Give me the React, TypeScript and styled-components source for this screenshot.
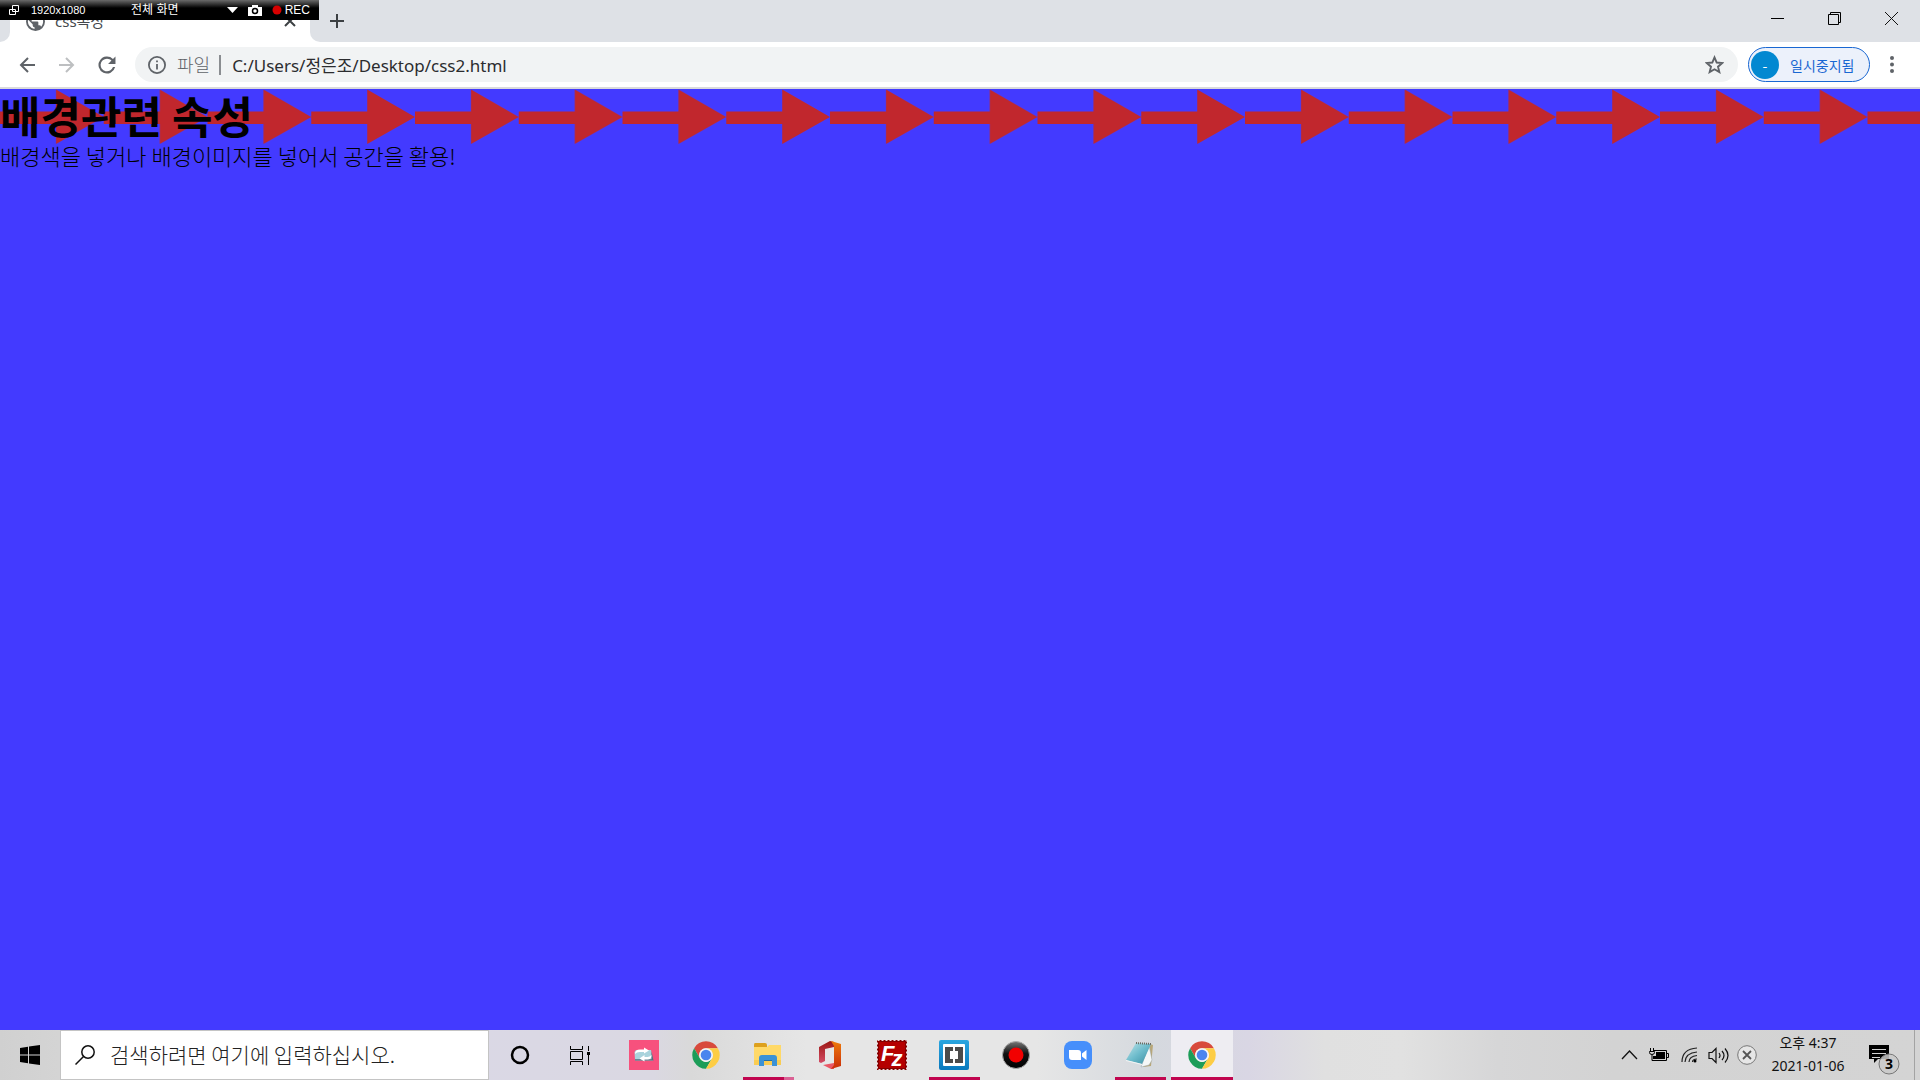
import React from "react";
import styled, { createGlobalStyle } from "styled-components";

const sans = `"Noto Sans", "Noto Sans CJK KR", sans-serif`;
const korean = `"Noto Sans CJK KR", "Noto Sans", sans-serif`;
const accent = "#c1054f";

const GlobalStyle = createGlobalStyle`
  *, *::before, *::after { box-sizing: border-box; }
  body { margin: 0; font-family: ${sans}; }
  button, input { font: inherit; color: inherit; border: 0; padding: 0; margin: 0; background: none; outline: none; }
  svg { display: block; flex: none; }
`;

const Screen = styled.div`
  display: flex;
  flex-direction: column;
  min-height: 100vh;
`;

/* ---------- Recorder overlay ---------- */

const Recorder = styled.aside`
  position: absolute;
  top: 0;
  left: 0;
  width: 319px;
  height: 20px;
  padding: 0 9px 0 8px;
  display: flex;
  align-items: center;
  color: #fff;
  font: 12px/20px "Liberation Sans Narrow", "Liberation Sans", "Noto Sans CJK KR", sans-serif;
  background: linear-gradient(#6a6a6a, #000 8px);
`;

const RecorderSize = styled.span`
  margin-left: 11px;
  width: 100px;
  font-size: 11px;
`;

const RecorderMode = styled.span`
  flex: 1;
`;

const RecorderTools = styled.div`
  display: flex;
  align-items: center;
  gap: 10px;
`;

const Rec = styled.span`
  display: flex;
  align-items: center;
  gap: 3px;
`;

/* ---------- Browser ---------- */

const TabStrip = styled.header`
  display: flex;
  height: 42px;
  background: #fff;
`;

const StripStart = styled.div`
  width: 10px;
  background: #dee1e6;
  border-bottom-right-radius: 10px;
`;

const Tab = styled.div`
  display: flex;
  align-items: center;
  width: 300px;
  padding: 0 12px 0 16px;
  color: #45494d;
  font-size: 15px;
`;

const TabTitle = styled.span`
  flex: 1;
  margin-left: 10px;
  line-height: 20px;
`;

const StripRest = styled.div`
  flex: 1;
  display: flex;
  align-items: flex-start;
  justify-content: space-between;
  background: #dee1e6;
  border-bottom-left-radius: 10px;
`;

const IconButton = styled.button<{ $w: number; $h: number }>`
  display: flex;
  align-items: center;
  justify-content: center;
  flex: none;
  width: ${(p) => p.$w}px;
  height: ${(p) => p.$h}px;
`;

const WindowButtons = styled.div`
  display: flex;
`;

const Toolbar = styled.nav`
  display: flex;
  align-items: center;
  height: 47px;
  padding: 0 6px 0 7px;
  background: #fff;
  border-bottom: 2px solid #d9dadc;
`;

const AddressBar = styled.form`
  flex: 1;
  display: flex;
  align-items: center;
  height: 35px;
  margin: 0 10px 0 8px;
  padding: 0 13px;
  border-radius: 18px;
  background: #f1f3f4;
  color: #2b2c2f;
  font-size: 17px;
`;

const Scheme = styled.label`
  margin-left: 11px;
  padding-right: 9px;
  border-right: 2px solid #8a8d91;
  line-height: 20px;
  font-size: 18px;
  font-weight: 300;
  color: #5f6368;
`;

const AddressInput = styled.input`
  flex: 1;
  min-width: 0;
  margin-left: 11px;
`;

const Profile = styled.button`
  display: flex;
  align-items: center;
  gap: 11px;
  height: 35px;
  width: 122px;
  padding: 0 2px;
  border: 1px solid #1967d2;
  border-radius: 18px;
  background: #ecf1fb;
  color: #1967d2;
  font-family: ${korean};
  font-size: 14px;
  line-height: 20px;
`;

const Avatar = styled.span`
  display: grid;
  place-items: center;
  width: 28px;
  height: 28px;
  border-radius: 50%;
  background: #0288d1;
  color: #fff;
  font-size: 14px;
`;

/* ---------- Web page ---------- */

const Page = styled.main`
  position: relative;
  flex: 1;
  background: #433aff;
  color: #000;
  font-family: ${korean};
`;

const ArrowStrip = styled.svg`
  position: absolute;
  top: 0;
  left: 0;
`;

const Heading = styled.h1`
  position: relative;
  margin: 0;
  font-size: 44px;
  line-height: 53px;
  font-weight: 700;
`;

const Paragraph = styled.p`
  position: relative;
  margin: 0;
  font-size: 22px;
  line-height: 27px;
  font-weight: 300;
`;

/* ---------- Taskbar ---------- */

const Taskbar = styled.footer`
  display: flex;
  height: 50px;
  background: linear-gradient(
    90deg,
    #d0d0d0 0,
    #d4d4d4 3%,
    #dad8e5 25%,
    #dad8e2 34%,
    #d9d9d9 36%,
    #e6e6e6 42%,
    #e6e6e6 54%,
    #d5d9de 60%,
    #d9d6e4 65%,
    #e0e0e0 69%,
    #e1e1e1 73%,
    #d6d6d7 78%,
    #d3d3d3 84%,
    #d4d4d4 100%
  );
`;

const SearchBox = styled.label`
  display: flex;
  align-items: center;
  gap: 15px;
  width: 429px;
  padding: 0 14px;
  background: #fff;
  border: 1px solid #c4c4c4;
`;

const SearchInput = styled.input`
  flex: 1;
  min-width: 0;
  height: 44px;
  padding-bottom: 2px;
  font-family: ${korean};
  font-size: 21px;
  font-weight: 300;
  &::placeholder { color: #222; opacity: 1; }
`;

const Apps = styled.div`
  display: flex;
  margin-left: 3px;
`;

const AppButton = styled.button<{ $state?: "open" | "many" | "active" }>`
  display: flex;
  flex-direction: column;
  align-items: center;
  width: 62px;
  height: 50px;
  padding-top: 10px;
  background: ${(p) => (p.$state === "active" ? "#eeedf2" : "none")};

  &::after {
    content: "";
    display: ${(p) => (p.$state ? "block" : "none")};
    width: ${(p) => (p.$state === "active" ? "100%" : "51px")};
    height: 3px;
    margin-top: 7px;
    background: ${(p) =>
      p.$state === "many" ? `linear-gradient(90deg, ${accent} 41px, #da6295 41px)` : accent};
  }
`;

const Tray = styled.div`
  display: flex;
  align-items: center;
  margin-left: auto;
`;

const Clock = styled.time`
  display: flex;
  flex-direction: column;
  align-items: center;
  width: 92px;
  padding-bottom: 2px;
  font-size: 14px;
  line-height: 23px;
  color: #111;
`;

const ShowDesktop = styled.button`
  width: 6px;
  height: 50px;
  border-left: 1px solid #a3a3a3;
`;

function Globe() {
  return (
    <svg width="19" height="19" viewBox="2 2 20 20" fill="#5f6368">
      <path d="M12 2a10 10 0 1 0 0 20 10 10 0 0 0 0-20zm-1 17.9A8 8 0 0 1 4.2 10.200L9 15v1a2 2 0 0 0 2 2v1.900zm6.900-2.500A2 2 0 0 0 16 16h-1v-3a1 1 0 0 0-1-1H8v-2h2a1 1 0 0 0 1-1V7h2a2 2 0 0 0 2-2v-.4a8 8 0 0 1 2.900 12.800z" />
    </svg>
  );
}

function ChromeLogo() {
  return (
    <svg width="30" height="30" viewBox="0 0 48 48">
      <path d="M4.950 13A22 22 0 0 1 43.050 13H24A11 11 0 0 0 14.470 29.500Z" fill="#d84a3c" />
      <path d="M4.950 13A22 22 0 0 0 24 46L33.530 29.500A11 11 0 0 1 14.470 29.500Z" fill="#1c9d58" />
      <path d="M24 46A22 22 0 0 0 43.050 13H24A11 11 0 0 1 33.530 29.500Z" fill="#fdcd45" />
      <circle cx="24" cy="24" r="11" fill="#f4f4f4" />
      <circle cx="24" cy="24" r="8.500" fill="#4a85ee" />
    </svg>
  );
}

function CaptureLogo() {
  return (
    <svg width="30" height="30">
      <path d="M0 0H30V30H0z" fill="#f7517d" />
      <path d="M7 10H22L24 20.500H6L5.500 12z" fill="#a9d3dc" />
      <path d="M22.500 11l2 9.500H6v-1.200h16.500z" fill="#516f7d" />
      <path d="M6 14q0-4.500 5-4.500h4V7.500l5 3-5 3V12h-4q-3.500 0-5 2zM22.500 15q0 4.500-4 4.500h-3v2l-5-3 5-3.500v2h3q2 0 4-2z" fill="#fff" />
    </svg>
  );
}

function FolderLogo() {
  return (
    <svg width="30" height="30">
      <path d="M1 5q0-2 1-2h10q2 0 2 2v2H1z" fill="#dda01d" />
      <path d="M1 7h13l2-2h12v20H1z" fill="#ffd968" />
      <path d="M1 20h27v5H1z" fill="#f9cc52" />
      <path d="M6 26V18q0-3 3-3h12q3 0 3 3v8h-5v-6h-8v6z" fill="#3b92d6" />
      <path d="M11 20h8v1h-8z" fill="#226fa8" />
    </svg>
  );
}

function OfficeLogo() {
  return (
    <svg width="30" height="30">
      <defs>
        <linearGradient id="officeLeft" x1="0" y1="0" x2="0" y2="1">
          <stop offset="0" stopColor="#9c1714" />
          <stop offset="1" stopColor="#d44c65" />
        </linearGradient>
        <linearGradient id="officeRight" x1="0" y1="0" x2="0" y2="1">
          <stop offset="0" stopColor="#ee7b0b" />
          <stop offset="1" stopColor="#c92c08" />
        </linearGradient>
      </defs>
      <path d="M4 7L15 1l4 1v5L10 9v12l-4 2-2-1z" fill="url(#officeLeft)" />
      <path d="M8 25l11-2v6l-3 0z" fill="#e95766" />
      <path d="M16 1l10 3v22l-10 3 3-4V6z" fill="url(#officeRight)" />
    </svg>
  );
}

function FileZillaLogo() {
  return (
    <svg width="30" height="30">
      <rect x="1" y="1" width="28" height="28" fill="#b50000" stroke="#850000" strokeWidth="2" />
      <rect x="0.500" y="0.500" width="29" height="29" fill="none" stroke="#e9dcdc" strokeDasharray="2 2" />
      <text x="4" y="21" fill="#fff" fontFamily="Liberation Sans, sans-serif" fontSize="22" fontWeight="700" fontStyle="italic">
        F<tspan dx="-3" dy="5">z</tspan>
      </text>
    </svg>
  );
}

function BracketsLogo() {
  return (
    <svg width="30" height="30">
      <defs>
        <linearGradient id="bracketsBlue" x1="0" y1="0" x2="0" y2="1">
          <stop offset="0" stopColor="#2ba6e0" />
          <stop offset="1" stopColor="#0878bd" />
        </linearGradient>
      </defs>
      <rect width="30" height="30" rx="2" fill="url(#bracketsBlue)" />
      <rect x="4" y="4" width="22" height="22" rx="1" fill="#fff" />
      <path d="M6 7h8v4h-3v8h3v4H6zM24 7h-8v4h3v8h-3v4h8z" fill="#4b4b4b" />
    </svg>
  );
}

function RecordLogo() {
  return (
    <svg width="30" height="30">
      <defs>
        <linearGradient id="recordRing" x1="0" y1="0" x2="0" y2="1">
          <stop offset="0" stopColor="#777" />
          <stop offset="0.450" stopColor="#111" />
          <stop offset="1" stopColor="#000" />
        </linearGradient>
      </defs>
      <circle cx="15" cy="15" r="13.500" fill="url(#recordRing)" stroke="#aaa" />
      <circle cx="15" cy="15" r="7.500" fill="#f20000" />
    </svg>
  );
}

function ZoomLogo() {
  return (
    <svg width="30" height="30">
      <rect x="1" y="1" width="28" height="28" rx="8" fill="#468ffb" />
      <path d="M6 10h9q3 0 3 3v7H9q-3 0-3-3zM19 13.500l4.500-3.500v10L19 16.500z" fill="#fff" />
    </svg>
  );
}

function NotepadLogo() {
  return (
    <svg width="30" height="30">
      <defs>
        <linearGradient id="notepadPage" x1="0" y1="0" x2="1" y2="1">
          <stop offset="0" stopColor="#c0e4e9" />
          <stop offset="0.500" stopColor="#6dbccc" />
          <stop offset="1" stopColor="#398b9f" />
        </linearGradient>
      </defs>
      <path d="M25 4l3 1-2 21-8 1z" fill="#b8a779" />
      <path d="M24 5l3 15-3 5-8 2z" fill="#f5f7f7" stroke="#99a5aa" strokeWidth="0.500" />
      <path d="M11 3l15 1-9 20L1 20z" fill="url(#notepadPage)" />
      <path d="M1 20l16 4v1L1 21z" fill="#f2f5f5" />
      <path d="M11 3l15 1" stroke="#6b6b62" strokeWidth="2" strokeDasharray="1 1" />
    </svg>
  );
}

const apps: { name: string; logo: React.ReactNode; state?: "open" | "many" | "active" }[] = [
  { name: "캡처", logo: <CaptureLogo /> },
  { name: "Chrome", logo: <ChromeLogo /> },
  { name: "파일 탐색기", logo: <FolderLogo />, state: "many" },
  { name: "Office", logo: <OfficeLogo /> },
  { name: "FileZilla", logo: <FileZillaLogo /> },
  { name: "Brackets", logo: <BracketsLogo />, state: "open" },
  { name: "녹화", logo: <RecordLogo /> },
  { name: "Zoom", logo: <ZoomLogo /> },
  { name: "메모장", logo: <NotepadLogo />, state: "open" },
  { name: "Chrome 창", logo: <ChromeLogo />, state: "active" },
];

export default function App() {
  return (
    <Screen>
      <GlobalStyle />

      <TabStrip>
        <StripStart />
        <Tab>
          <Globe />
          <TabTitle>css속성</TabTitle>
          <IconButton $w={16} $h={16} aria-label="탭 닫기">
            <svg width="12" height="12" stroke="#3c4043" strokeWidth="2">
              <path d="M1 1l10 10M11 1L1 11" />
            </svg>
          </IconButton>
        </Tab>
        <StripRest>
          <IconButton $w={54} $h={42} aria-label="새 탭">
            <svg width="16" height="16" stroke="#3c4043" strokeWidth="2">
              <path d="M8 1v14M1 8h14" />
            </svg>
          </IconButton>
          <WindowButtons>
            <IconButton $w={57} $h={36} aria-label="최소화">
              <svg width="13" height="13" stroke="#000">
                <path d="M0 6.500h13" />
              </svg>
            </IconButton>
            <IconButton $w={57} $h={36} aria-label="이전 크기로">
              <svg width="13" height="13" stroke="#000" fill="none">
                <path d="M0.500 2.500h10v10h-10zM2.500 2.500v-2h10v10h-2" />
              </svg>
            </IconButton>
            <IconButton $w={57} $h={36} aria-label="닫기">
              <svg width="13" height="13" stroke="#111">
                <path d="M0 0l13 13M13 0L0 13" />
              </svg>
            </IconButton>
          </WindowButtons>
        </StripRest>
      </TabStrip>

      <Toolbar>
        <IconButton $w={40} $h={35} aria-label="뒤로">
          <svg width="16" height="16" stroke="#5f6368" strokeWidth="2" fill="none">
            <path d="M16 8H2M9 1L2 8l7 7" />
          </svg>
        </IconButton>
        <IconButton $w={40} $h={35} aria-label="앞으로">
          <svg width="16" height="16" stroke="#bdbfc1" strokeWidth="2" fill="none">
            <path d="M0 8h14M7 1l7 7-7 7" />
          </svg>
        </IconButton>
        <IconButton $w={40} $h={35} aria-label="새로고침">
          <svg width="18" height="18" viewBox="3.500 3.500 17 17" fill="#5f6368">
            <path d="M17.650 6.350A8 8 0 1 0 19.730 14h-2.080A6 6 0 1 1 12 6c1.660 0 3.140.69 4.220 1.780L13 11h7V4z" />
          </svg>
        </IconButton>
        <AddressBar onSubmit={(e) => e.preventDefault()}>
          <svg width="18" height="18" viewBox="2 2 20 20" fill="#5f6368">
            <path d="M11 7h2v2h-2zm0 4h2v6h-2zm1-9a10 10 0 1 0 0 20 10 10 0 0 0 0-20zm0 18a8 8 0 1 1 0-16 8 8 0 0 1 0 16z" />
          </svg>
          <Scheme htmlFor="address">파일</Scheme>
          <AddressInput id="address" defaultValue="C:/Users/정은조/Desktop/css2.html" />
          <IconButton type="button" $w={22} $h={30} aria-label="북마크">
            <svg width="19" height="19" viewBox="2 1.500 20 20" fill="none" stroke="#5f6368" strokeWidth="2">
              <path d="M12 4l2.300 5.400 5.900.5-4.500 3.900 1.400 5.700-5.100-3-5.100 3 1.400-5.700-4.500-3.900 5.900-.5z" />
            </svg>
          </IconButton>
        </AddressBar>
        <Profile>
          <Avatar>-</Avatar>
          일시중지됨
        </Profile>
        <IconButton $w={44} $h={35} aria-label="메뉴">
          <svg width="4" height="17" fill="#5f6368">
            <circle cx="2" cy="2" r="2" />
            <circle cx="2" cy="8.500" r="2" />
            <circle cx="2" cy="15" r="2" />
          </svg>
        </IconButton>
      </Toolbar>

      <Page>
        <ArrowStrip width="100%" height="56" aria-hidden="true">
          <defs>
            <pattern id="arrow" width="103.750" height="56" patternUnits="userSpaceOnUse">
              <path d="M0 22.500H56V0.500L103.750 28 56 55V35H0z" fill="#c1272d" />
            </pattern>
          </defs>
          <rect width="100%" height="56" fill="url(#arrow)" />
        </ArrowStrip>
        <Heading>배경관련 속성</Heading>
        <Paragraph>배경색을 넣거나 배경이미지를 넣어서 공간을 활용!</Paragraph>
      </Page>

      <Taskbar>
        <IconButton $w={60} $h={50} aria-label="시작">
          <svg width="20" height="20" fill="#000">
            <path d="M0 3l8-1.200V9.500H0zM9 1.600L20 0v9.500H9zM0 10.500h8v7.700L0 17zM9 10.500h11V20L9 18.400z" />
          </svg>
        </IconButton>
        <SearchBox>
          <svg width="20" height="20" fill="none" stroke="#111" strokeWidth="1.500">
            <circle cx="13" cy="7" r="6.200" />
            <path d="M8.500 11.500L0.500 19.500" />
          </svg>
          <SearchInput aria-label="검색" placeholder="검색하려면 여기에 입력하십시오." />
        </SearchBox>
        <IconButton $w={61} $h={50} aria-label="Cortana">
          <svg width="20" height="20" fill="none" stroke="#000" strokeWidth="2.500">
            <circle cx="10" cy="10" r="8" />
          </svg>
        </IconButton>
        <IconButton $w={60} $h={50} aria-label="작업 보기">
          <svg width="20" height="19" fill="none" stroke="#000">
            <path d="M0.500 0v3.500h12V0M0.500 19v-3.500h12V19M0.500 5.500h12v8h-12zM18.500 0v5M18.500 9v10" />
            <path d="M17 6h3v3h-3z" fill="#000" stroke="none" />
          </svg>
        </IconButton>
        <Apps>
          {apps.map((app) => (
            <AppButton key={app.name} aria-label={app.name} $state={app.state}>
              {app.logo}
            </AppButton>
          ))}
        </Apps>
        <Tray>
          <IconButton $w={30} $h={50} aria-label="숨겨진 아이콘">
            <svg width="17" height="10" fill="none" stroke="#111" strokeWidth="1.300">
              <path d="M1 9l7.500-8L16 9" />
            </svg>
          </IconButton>
          <IconButton $w={30} $h={50} aria-label="배터리">
            <svg width="20" height="14" fill="none" stroke="#000">
              <path d="M5 2.500h12.500v10H5.500M18 5.500h1.500v4H18" />
              <path d="M7 4h9v7H4V8h3z" fill="#000" stroke="none" />
              <path d="M1.500 0v3M4.500 0v3M0.500 3.500h5v1q0 2-2.500 2t-2.500-2zM3 6.500v6h3" />
            </svg>
          </IconButton>
          <IconButton $w={30} $h={50} aria-label="네트워크">
            <svg width="17" height="16" fill="none" stroke="#222" strokeWidth="1.200">
              <path d="M1 15Q1 2 16 1M4 15Q4.500 6 16 5M8 15Q8 9.500 16 8.500M11.500 15q0-3 4.500-3" />
              <circle cx="14" cy="14" r="1.500" fill="#000" stroke="none" />
            </svg>
          </IconButton>
          <IconButton $w={28} $h={50} aria-label="볼륨">
            <svg width="21" height="17" fill="none" stroke="#111" strokeWidth="1.200">
              <path d="M1 5.500h3l4-4v14l-4-4H1zM11 6q2 2.500 0 5M14 4q4 4.500 0 9M17 1.500q6 7 0 14" />
            </svg>
          </IconButton>
          <IconButton $w={30} $h={50} aria-label="상태">
            <svg width="20" height="20" fill="none">
              <circle cx="10" cy="10" r="9.300" fill="#e6e6e6" stroke="#777" />
              <path d="M6 6l8 8M14 6l-8 8" stroke="#555" strokeWidth="1.800" />
            </svg>
          </IconButton>
          <Clock dateTime="2021-01-06T16:37">
            <span>오후 4:37</span>
            <span>2021-01-06</span>
          </Clock>
          <IconButton $w={60} $h={50} aria-label="알림 3개">
            <svg width="32" height="40">
              <path d="M1 10h20v14H10l-4 4v-4H1z" fill="#000" />
              <path d="M4 14.500h14M4 18.500h14M4 22.500h8" stroke="#d3d3d3" />
              <circle cx="21" cy="29" r="10" fill="#c9c9c9" fillOpacity="0.850" stroke="#777" />
              <text x="21" y="34" textAnchor="middle" fontFamily="Noto Sans, sans-serif" fontWeight="700" fontSize="14">3</text>
            </svg>
          </IconButton>
          <ShowDesktop aria-label="바탕 화면 보기" />
        </Tray>
      </Taskbar>

      <Recorder>
        <svg width="12" height="11" fill="none" stroke="#fff">
          <path d="M4.500 0.500h6v6h-6zM1.500 4.500h6v5h-6z" />
        </svg>
        <RecorderSize>1920x1080</RecorderSize>
        <RecorderMode>전체 화면</RecorderMode>
        <RecorderTools>
          <svg width="11" height="6" fill="#fff">
            <path d="M0 0h11L5.500 6z" />
          </svg>
          <svg width="14" height="11" fill="none">
            <path d="M0 2h4V0h6v2h4v9H0z" fill="#fff" />
            <circle cx="7" cy="6" r="2.500" stroke="#000" strokeWidth="1.500" />
          </svg>
          <Rec>
            <svg width="10" height="10" fill="#d80000">
              <circle cx="5" cy="5" r="4.500" />
            </svg>
            REC
          </Rec>
        </RecorderTools>
      </Recorder>
    </Screen>
  );
}
